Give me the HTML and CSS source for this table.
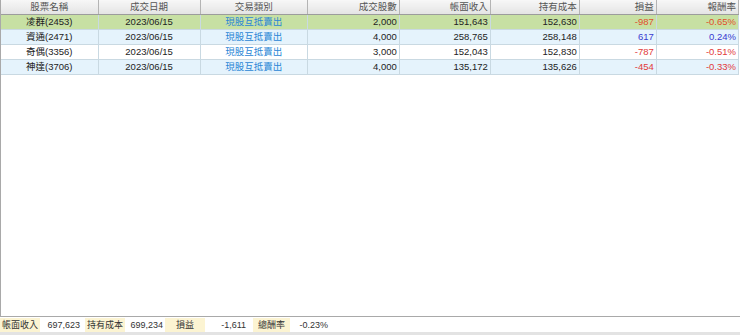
FILE: index.html
```html
<!DOCTYPE html>
<html lang="zh-Hant">
<head>
<meta charset="utf-8">
<link rel="stylesheet" href="styles.css">
</head>
<body>
<div class="app">
  <div class="gridwrap">
    <table class="grid">
      <colgroup>
        <col class="c1"><col class="c2"><col class="c3"><col class="c4"><col class="c5"><col class="c6"><col class="c7"><col class="c8">
      </colgroup>
      <thead>
        <tr>
          <th class="ctr">股票名稱</th>
          <th class="ctr">成交日期</th>
          <th class="ctr">交易類別</th>
          <th class="num">成交股數</th>
          <th class="num">帳面收入</th>
          <th class="num">持有成本</th>
          <th class="num">損益</th>
          <th class="num">報酬率</th>
        </tr>
      </thead>
      <tbody>
        <tr class="sel">
          <td class="ctr">凌群(2453)</td>
          <td class="ctr">2023/06/15</td>
          <td class="ctr link">現股互抵賣出</td>
          <td class="num">2,000</td>
          <td class="num">151,643</td>
          <td class="num">152,630</td>
          <td class="num neg">-987</td>
          <td class="num neg">-0.65%</td>
        </tr>
        <tr class="alt">
          <td class="ctr">資通(2471)</td>
          <td class="ctr">2023/06/15</td>
          <td class="ctr link">現股互抵賣出</td>
          <td class="num">4,000</td>
          <td class="num">258,765</td>
          <td class="num">258,148</td>
          <td class="num pos">617</td>
          <td class="num pos">0.24%</td>
        </tr>
        <tr>
          <td class="ctr">奇偶(3356)</td>
          <td class="ctr">2023/06/15</td>
          <td class="ctr link">現股互抵賣出</td>
          <td class="num">3,000</td>
          <td class="num">152,043</td>
          <td class="num">152,830</td>
          <td class="num neg">-787</td>
          <td class="num neg">-0.51%</td>
        </tr>
        <tr class="alt">
          <td class="ctr">神達(3706)</td>
          <td class="ctr">2023/06/15</td>
          <td class="ctr link">現股互抵賣出</td>
          <td class="num">4,000</td>
          <td class="num">135,172</td>
          <td class="num">135,626</td>
          <td class="num neg">-454</td>
          <td class="num neg">-0.33%</td>
        </tr>
      </tbody>
    </table>
    <div class="empty"></div>
  </div>
  <div class="summary">
    <span class="lbl w40">帳面收入</span><span class="val w42">697,623</span>
    <span class="lbl w40 ml3">持有成本</span><span class="val w40">699,234</span>
    <span class="lbl w40">損益</span><span class="val w43">-1,611</span>
    <span class="lbl w37 ml5">總酬率</span><span class="val w40">-0.23%</span>
  </div>
  <div class="strip"></div>
</div>
</body>
</html>
```

FILE: styles.css
```css
* { box-sizing: border-box; }
html, body { margin: 0; padding: 0; background: #fff; }
body {
  width: 740px;
  height: 335px;
  overflow: hidden;
  font-family: "Liberation Sans", "Noto Sans CJK TC", sans-serif;
  font-size: 9.5px;
  color: #222;
}
.app {
  display: flex;
  flex-direction: column;
  height: 335px;
}
.gridwrap {
  flex: 1;
  display: flex;
  flex-direction: column;
  border-left: 1px solid #a9a9a9;
  border-bottom: 1px solid #a9a9a9;
}
.grid {
  width: 738px;
  border-collapse: collapse;
  table-layout: fixed;
}
.c1 { width: 97px; }
.c2 { width: 102px; }
.c3 { width: 107px; }
.c4 { width: 92px; }
.c5 { width: 91px; }
.c6 { width: 89px; }
.c7 { width: 77px; }
.c8 { width: 82px; }
th {
  height: 14px;
  padding: 0 2px;
  font-weight: normal;
  color: #555;
  background: linear-gradient(#f7f7f7, #e4e4e4);
  border-right: 1px solid #b4b4b4;
  border-bottom: 1px solid #9c9c9c;
  line-height: 13px;
  white-space: nowrap;
}
td {
  height: 15px;
  padding: 0 2px;
  line-height: 14px;
  border-right: 1px solid #c9d9e2;
  border-bottom: 1px solid #c9d9e2;
  white-space: nowrap;
}
.ctr { text-align: center; }
.num { text-align: right; }
tr.sel td { background: #c7e0a3; }
tr.alt td { background: #e5f3fc; }
.link { color: #2a86d6; }
.neg { color: #e23a3a; }
tr.sel .neg { color: #e0502a; }
.pos { color: #3a3ad0; }
.empty { flex: 1; }
.summary {
  display: flex;
  align-items: stretch;
  height: 15px;
  padding-top: 1px;
  font-size: 9px;
  line-height: 14px;
  color: #333;
}
.lbl {
  background: #fcf4d2;
  text-align: center;
}
.val {
  text-align: right;
  padding-right: 2px;
}
.w37 { width: 37px; }
.w40 { width: 40px; }
.w42 { width: 42px; }
.w43 { width: 43px; }
.ml3 { margin-left: 3px; }
.ml5 { margin-left: 5px; }
.strip {
  height: 3px;
  background: #e3e3e3;
}
```
